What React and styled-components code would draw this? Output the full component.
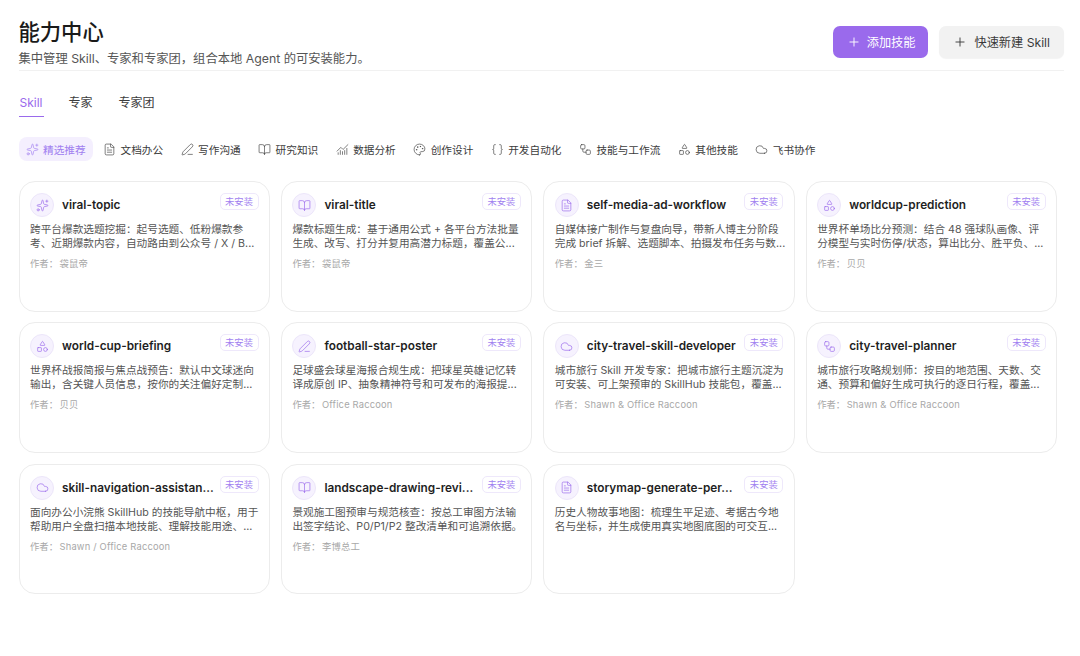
import React from 'react'
import styled, { createGlobalStyle } from 'styled-components'
import { Sparkles, FileText, PenLine, BookOpen, ChartNoAxesCombined, Palette, Braces, Workflow, Shapes, Cloud, Plus } from 'lucide-react'

const GlobalStyle = createGlobalStyle`
  html, body { margin: 0; padding: 0; background: #fff; }
  body {
    font-family: Inter, "Noto Sans CJK SC", sans-serif;
    color: #1c1c1c;
    -webkit-font-smoothing: antialiased;
  }
`

/* Page */

const Page = styled.div`
  width: 1080px;
  height: 656px;
  overflow: hidden;
  box-sizing: border-box;
  padding: 18px 16px 0 18.5px;
`

/* Header */

const Header = styled.header`
  display: flex;
  justify-content: space-between;
  align-items: flex-start;
  height: 52px;
  border-bottom: 1.5px solid #f1f1f1;
`

const Title = styled.h1`
  margin: 0;
  font-size: 21.3px;
  line-height: 28px;
  font-weight: 500;
  color: #1a1a1a;
`

const Subtitle = styled.p`
  margin: 4px 0 0;
  font-size: 12.3px;
  line-height: 18px;
  color: #555;
`

const Actions = styled.div`
  display: flex;
  gap: 11px;
  margin-top: 8px;
`

const ActionButton = styled.button`
  display: flex;
  align-items: center;
  gap: ${({ $primary }) => ($primary ? '6px' : '7px')};
  height: 32px;
  box-sizing: border-box;
  padding: ${({ $primary }) => ($primary ? '0 13px 0 14px' : '0 14px')};
  border: none;
  border-radius: 7px;
  font-family: inherit;
  font-size: 12.2px;
  background: ${({ $primary }) => ($primary ? '#9a6aec' : '#f2f2f2')};
  color: ${({ $primary }) => ($primary ? '#fff' : '#3a3a3a')};
  box-shadow: ${({ $primary }) => ($primary ? 'none' : '0 1px 1px rgba(0,0,0,.05)')};
`

/* Tabs */

const Tabs = styled.nav`
  display: flex;
  gap: 24px;
  margin-top: 22px;
`

const Tab = styled.div`
  padding: 0 1px;
  height: 24px;
  line-height: 20px;
  font-size: 12px;
  box-sizing: border-box;
  color: ${({ $active }) => ($active ? '#9a6aec' : '#3c3c3c')};
  border-bottom: 1.5px solid ${({ $active }) => ($active ? '#9a6aec' : 'transparent')};
`

/* Filter row */

const Filters = styled.div`
  display: flex;
  gap: 3.4px;
  margin-top: 20px;
`

const Filter = styled.div`
  display: flex;
  align-items: center;
  gap: 4.5px;
  height: 24px;
  padding: 0 7px;
  border-radius: 8px;
  font-size: 10.67px;
  white-space: nowrap;
  background: ${({ $active }) => ($active ? '#f4effe' : 'transparent')};
  color: ${({ $active }) => ($active ? '#a17ff0' : '#3c3c3c')};
`

/* Cards */

const Grid = styled.div`
  display: grid;
  grid-template-columns: repeat(4, 251.5px);
  grid-auto-rows: 130.5px;
  gap: 10.9px;
  margin-top: 20px;
`

const Card = styled.article`
  box-sizing: border-box;
  padding: 11px 10.5px;
  border: 1px solid #ececec;
  border-radius: 16px;
  background: #fff;
`

const CardTop = styled.div`
  display: flex;
  align-items: flex-start;
  gap: 6px;
`

const IconCircle = styled.div`
  flex: none;
  display: flex;
  align-items: center;
  justify-content: center;
  width: 24px;
  height: 24px;
  margin-right: 2px;
  box-sizing: border-box;
  border-radius: 50%;
  background: #f6f2fe;
  border: 1px solid #ece6fa;
  color: #9a6aec;
`

const CardName = styled.div`
  flex: 1;
  min-width: 0;
  font-size: 11.8px;
  font-weight: 600;
  line-height: 25px;
  color: #1f1f1f;
  white-space: nowrap;
`

const Badge = styled.span`
  flex: none;
  width: 39px;
  height: 17px;
  box-sizing: border-box;
  border: 1px solid #eee8fb;
  border-radius: 5px;
  text-align: center;
  font-size: 9.3px;
  line-height: 15px;
  color: #a17ff0;
`

const CardDesc = styled.p`
  margin: 5px -4px 0 0;
  font-size: 10.67px;
  line-height: 14px;
  color: #555;
`

const CardAuthor = styled.div`
  margin-top: 6px;
  font-size: 9.33px;
  line-height: 14px;
  letter-spacing: 0.2px;
  color: #a8a8a8;
`

const AuthorLabel = styled.span`
  margin-right: 1.5px;
  letter-spacing: 0;
`

const filters = [
  { icon: Sparkles, label: '精选推荐', active: true },
  { icon: FileText, label: '文档办公' },
  { icon: PenLine, label: '写作沟通' },
  { icon: BookOpen, label: '研究知识' },
  { icon: ChartNoAxesCombined, label: '数据分析' },
  { icon: Palette, label: '创作设计' },
  { icon: Braces, label: '开发自动化' },
  { icon: Workflow, label: '技能与工作流' },
  { icon: Shapes, label: '其他技能' },
  { icon: Cloud, label: '飞书协作' },
]

// \uFF1A and \uFF0C are the full-width colon and comma
const skills = [
  { icon: Sparkles, name: 'viral-topic', desc: '跨平台爆款选题挖掘\uFF1A起号选题、低粉爆款参考、近期爆款内容\uFF0C自动路由到公众号 / X / B...', author: '袋鼠帝' },
  { icon: BookOpen, name: 'viral-title', desc: '爆款标题生成\uFF1A基于通用公式 + 各平台方法批量生成、改写、打分并复用高潜力标题\uFF0C覆盖公...', author: '袋鼠帝' },
  { icon: FileText, name: 'self-media-ad-workflow', desc: '自媒体接广制作与复盘向导\uFF0C带新人博主分阶段完成 brief 拆解、选题脚本、拍摄发布任务与数...', author: '金三' },
  { icon: Shapes, name: 'worldcup-prediction', desc: '世界杯单场比分预测\uFF1A结合 48 强球队画像、评分模型与实时伤停/状态\uFF0C算出比分、胜平负、...', author: '贝贝' },
  { icon: Shapes, name: 'world-cup-briefing', desc: '世界杯战报简报与焦点战预告\uFF1A默认中文球迷向输出\uFF0C含关键人员信息\uFF0C按你的关注偏好定制...', author: '贝贝' },
  { icon: PenLine, name: 'football-star-poster', desc: '足球盛会球星海报合规生成\uFF1A把球星英雄记忆转译成原创 IP、抽象精神符号和可发布的海报提...', author: 'Office Raccoon' },
  { icon: Cloud, name: 'city-travel-skill-developer', desc: '城市旅行 Skill 开发专家\uFF1A把城市旅行主题沉淀为可安装、可上架预审的 SkillHub 技能包\uFF0C覆盖...', author: 'Shawn & Office Raccoon' },
  { icon: Workflow, name: 'city-travel-planner', desc: '城市旅行攻略规划师\uFF1A按目的地范围、天数、交通、预算和偏好生成可执行的逐日行程\uFF0C覆盖...', author: 'Shawn & Office Raccoon' },
  { icon: Cloud, name: 'skill-navigation-assistan...', desc: '面向办公小浣熊 SkillHub 的技能导航中枢\uFF0C用于帮助用户全盘扫描本地技能、理解技能用途、...', author: 'Shawn / Office Raccoon' },
  { icon: BookOpen, name: 'landscape-drawing-revi...', desc: '景观施工图预审与规范核查\uFF1A按总工审图方法输出签字结论、P0/P1/P2 整改清单和可追溯依据。', author: '李博总工' },
  { icon: FileText, name: 'storymap-generate-per...', desc: '历史人物故事地图\uFF1A梳理生平足迹、考据古今地名与坐标\uFF0C并生成使用真实地图底图的可交互...' },
]

const SkillCard = ({ icon: Icon, name, desc, author }) => (
  <Card>
    <CardTop>
      <IconCircle><Icon size={13} strokeWidth={1.25} /></IconCircle>
      <CardName>{name}</CardName>
      <Badge>未安装</Badge>
    </CardTop>
    <CardDesc>{desc}</CardDesc>
    {author && <CardAuthor><AuthorLabel>{'作者\uFF1A'}</AuthorLabel>{author}</CardAuthor>}
  </Card>
)

export default function App() {
  return (
    <Page>
      <GlobalStyle />
      <Header>
        <div>
          <Title>能力中心</Title>
          <Subtitle>{'集中管理 Skill、专家和专家团\uFF0C组合本地 Agent 的可安装能力。'}</Subtitle>
        </div>
        <Actions>
          <ActionButton $primary><Plus size={14} strokeWidth={1.6} />添加技能</ActionButton>
          <ActionButton><Plus size={14} strokeWidth={1.6} />快速新建 Skill</ActionButton>
        </Actions>
      </Header>
      <Tabs>
        <Tab $active>Skill</Tab>
        <Tab>专家</Tab>
        <Tab>专家团</Tab>
      </Tabs>
      <Filters>
        {filters.map(({ icon: Icon, label, active }) => (
          <Filter key={label} $active={active}>
            <Icon size={13} strokeWidth={1.2} />
            {label}
          </Filter>
        ))}
      </Filters>
      <Grid>
        {skills.map((skill) => <SkillCard key={skill.name} {...skill} />)}
      </Grid>
    </Page>
  )
}
